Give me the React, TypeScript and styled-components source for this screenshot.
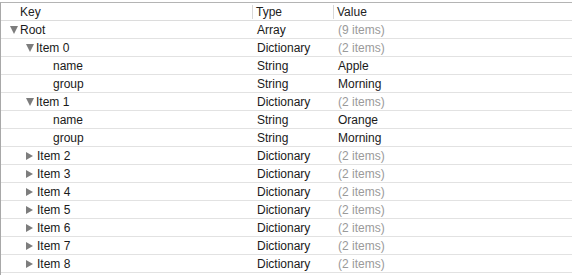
import styled, { createGlobalStyle } from "styled-components";

const GlobalStyle = createGlobalStyle`
  body {
    margin: 0;
    background: #fff;
    font-family: "Liberation Sans", Arial, sans-serif;
    font-size: 12px;
    color: #1a1a1a;
  }
`;

type Row = { level: number; key: string; type: string; value: string; open?: boolean; leaf?: boolean };

const rows: Row[] = [
  { level: 0, key: "Root", type: "Array", value: "(9 items)", open: true },
  { level: 1, key: "Item 0", type: "Dictionary", value: "(2 items)", open: true },
  { level: 2, key: "name", type: "String", value: "Apple", leaf: true },
  { level: 2, key: "group", type: "String", value: "Morning", leaf: true },
  { level: 1, key: "Item 1", type: "Dictionary", value: "(2 items)", open: true },
  { level: 2, key: "name", type: "String", value: "Orange", leaf: true },
  { level: 2, key: "group", type: "String", value: "Morning", leaf: true },
  ...[2, 3, 4, 5, 6, 7, 8].map((n) => ({
    level: 1,
    key: `Item ${n}`,
    type: "Dictionary",
    value: "(2 items)",
    open: false,
  })),
];

const App = () => (
  <>
    <GlobalStyle />
    <Editor>
      <Header>
        <HeadCell>Key</HeadCell>
        <HeadCell $divider>Type</HeadCell>
        <HeadCell $divider>Value</HeadCell>
      </Header>
      {rows.map((r, i) => (
        <Line key={i}>
          <KeyCell style={{ paddingLeft: 9 + r.level * 16 }}>
            {r.leaf ? (
              <Spacer />
            ) : (
              <Disclosure $open={!!r.open} />
            )}
            {r.key}
          </KeyCell>
          <TypeCell>{r.type}</TypeCell>
          <ValueCell $muted={r.value.startsWith("(")}>{r.value}</ValueCell>
        </Line>
      ))}
    </Editor>
  </>
);

export default App;

const Editor = styled.div`
  margin-top: 2px;
  border-top: 1px solid #b4b4b4;
  border-left: 1px solid #a8a8a8;
  height: 273px;
  box-sizing: border-box;
`;

const Header = styled.div`
  display: grid;
  grid-template-columns: 251px 81px 1fr;
  height: 17px;
  border-bottom: 1px solid #dcdcdc;
  color: #222;
`;

const HeadCell = styled.div<{ $divider?: boolean }>`
  display: flex;
  align-items: center;
  padding-left: ${(p) => (p.$divider ? "3px" : "19px")};
  border-left: ${(p) => (p.$divider ? "1px solid #d8d8d8" : "none")};
  margin: 2px 0;
`;

const Line = styled.div`
  display: grid;
  grid-template-columns: 251px 81px 1fr;
  height: 17px;
  border-bottom: 1px solid #e2e2e2;
  align-items: center;
`;

const KeyCell = styled.div`
  display: flex;
  align-items: center;
  white-space: nowrap;
`;

const Spacer = styled.span`
  width: 11px;
`;

const Disclosure = styled.span<{ $open: boolean }>`
  width: 0;
  height: 0;
  margin-right: ${(p) => (p.$open ? "2px" : "4px")};
  ${(p) =>
    p.$open
      ? `border-left: 4.5px solid transparent;
         border-right: 4.5px solid transparent;
         border-top: 8px solid #7d7d7d;`
      : `border-top: 4.5px solid transparent;
         border-bottom: 4.5px solid transparent;
         border-left: 7px solid #7d7d7d;`}
`;

const TypeCell = styled.div`
  padding-left: 5px;
`;

const ValueCell = styled.div<{ $muted: boolean }>`
  padding-left: 5px;
  color: ${(p) => (p.$muted ? "#9a9a9a" : "#1a1a1a")};
`;
